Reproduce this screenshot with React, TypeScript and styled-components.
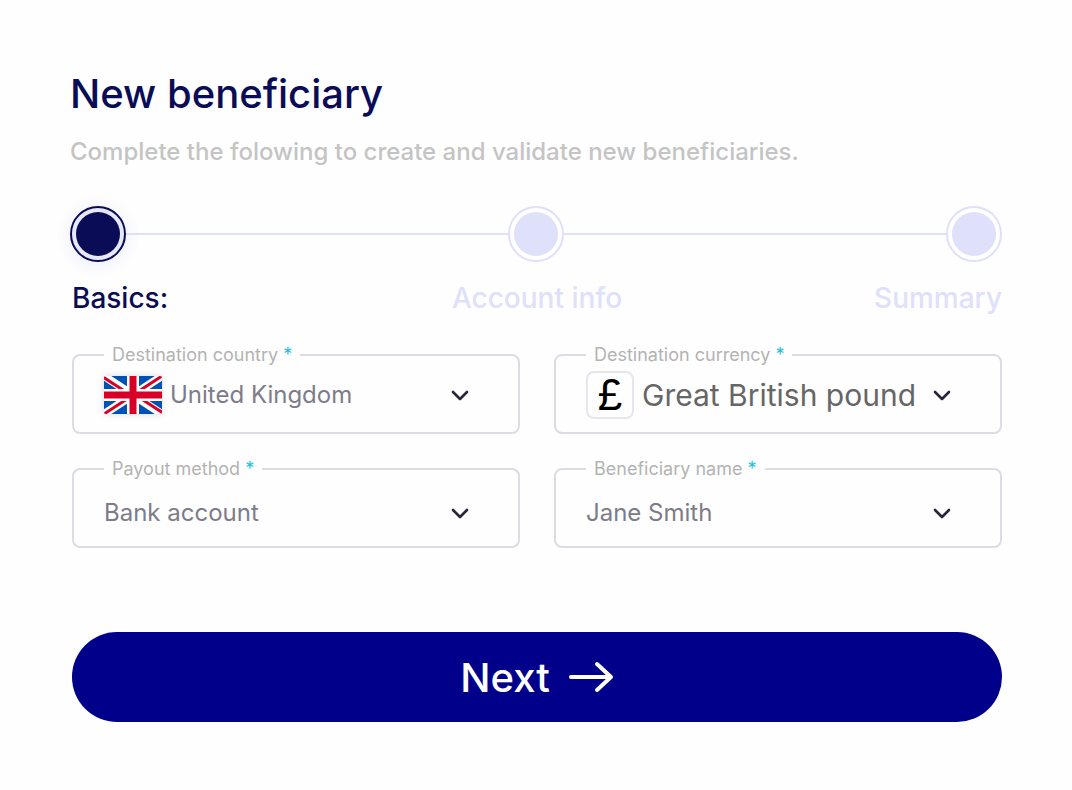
import React from "react";
import styled, { createGlobalStyle, css } from "styled-components";

const navy = "#0a0d56";
const lavender = "#dfe0fa";

const GlobalStyle = createGlobalStyle`
  *, *::before, *::after { box-sizing: border-box; }
  body {
    margin: 0;
    background: #fefefe;
    font-family: Inter, "Liberation Sans", sans-serif;
  }
`;

const Page = styled.main`
  padding: 70px 70px 68px;
`;

const Title = styled.h1`
  margin: 0;
  color: ${navy};
  font-size: 40px;
  line-height: 48px;
  font-weight: 500;
`;

const Subtitle = styled.p`
  margin: 18px 0 0;
  color: #c4c4c4;
  font-size: 24px;
  line-height: 32px;
  font-weight: 500;
`;

const Track = styled.div`
  display: flex;
  align-items: center;
  margin-top: 38px;
`;

const Line = styled.span`
  flex: 1;
  height: 2px;
  background: ${lavender};
`;

const Dot = styled.span<{ $active?: boolean }>`
  width: 56px;
  height: 56px;
  padding: 4px;
  border: 2px solid ${lavender};
  border-radius: 50%;
  background: #ffffff;

  &::before {
    content: "";
    display: block;
    height: 100%;
    border-radius: 50%;
    background: ${lavender};
  }

  ${({ $active }) =>
    $active &&
    css`
      border-color: ${navy};
      background: #e8e8fb;
      box-shadow: 0 2px 16px rgba(80, 80, 220, 0.12);

      &::before {
        background: ${navy};
      }
    `}
`;

const StepLabels = styled.ol`
  display: grid;
  grid-template-columns: repeat(3, 1fr);
  margin: 20px 0 0;
  padding: 0 0 0 2px;
  list-style: none;
`;

const StepLabel = styled.li<{ $align: "left" | "center" | "right"; $active?: boolean }>`
  color: ${({ $active }) => ($active ? navy : lavender)};
  text-align: ${({ $align }) => $align};
  font-size: 28px;
  line-height: 32px;
  font-weight: 500;
`;

const Form = styled.form`
  margin-top: 31px;
  padding-left: 2px;
`;

const Fields = styled.div`
  display: grid;
  grid-template-columns: repeat(2, minmax(0, 1fr));
  gap: 25px 34px;
`;

const FieldBox = styled.fieldset`
  min-width: 0;
  margin: 0;
  padding: 0 46px 0 30px;
  border: 2px solid #dcdce2;
  border-radius: 8px;
`;

const Legend = styled.legend`
  padding: 0 8px;
  color: #b3b3b3;
  font-size: 18px;
  line-height: 20px;
`;

const Required = styled.span`
  color: #26bfd9;
`;

const Control = styled.div<{ $raised: boolean }>`
  display: flex;
  align-items: center;
  gap: 8px;
  height: 67px;
  padding-bottom: ${({ $raised }) => ($raised ? 8 : 0)}px;
`;

const Select = styled.select<{ $large?: boolean }>`
  flex: 1;
  min-width: 0;
  height: 48px;
  margin: 0 -32px 0 0;
  padding: 0 24px 0 0;
  border: 0;
  appearance: none;
  background: transparent;
  color: ${({ $large }) => ($large ? "#666666" : "#7c7c8a")};
  font-family: inherit;
  font-size: ${({ $large }) => ($large ? 30 : 24)}px;
`;

const Chevron = styled.svg`
  flex: none;
  width: 24px;
  height: 24px;
  pointer-events: none;
`;

const Flag = styled.svg`
  flex: none;
  width: 58px;
  height: 38px;
  border-radius: 2px;
  filter: drop-shadow(0 0 3px rgba(0, 0, 0, 0.15));
`;

const Currency = styled.span`
  display: grid;
  place-items: center;
  flex: none;
  width: 48px;
  height: 48px;
  border: 2px solid #e6e6ec;
  border-radius: 8px;
  color: #000000;
  font-family: "Liberation Sans", sans-serif;
  font-size: 44px;
  line-height: 44px;
`;

const NextButton = styled.button`
  display: flex;
  align-items: center;
  justify-content: center;
  gap: 18px;
  width: 100%;
  height: 90px;
  margin-top: 84px;
  padding: 0;
  border: 0;
  border-radius: 45px;
  background: #00008b;
  color: #ffffff;
  font-family: inherit;
  font-size: 40px;
  font-weight: 500;
  cursor: pointer;
`;

const UnitedKingdomFlag = () => (
  <Flag viewBox="0 0 58 38" preserveAspectRatio="none" aria-hidden="true">
    <rect width="58" height="38" fill="#0052b4" />
    <path d="M0 0L58 38M58 0L0 38" stroke="#fff" strokeWidth="8" />
    <path d="M-1 1L22 16M59 37L36 22M58 0L35 15M0 38L23 23" stroke="#d80027" strokeWidth="3" />
    <path d="M29 0V38M0 19H58" stroke="#fff" strokeWidth="12" />
    <path d="M29 0V38M0 19H58" stroke="#d80027" strokeWidth="7" />
  </Flag>
);

interface FieldProps {
  id: string;
  label: string;
  value: string;
  icon?: React.ReactNode;
  large?: boolean;
}

const Field = ({ id, label, value, icon, large }: FieldProps) => (
  <FieldBox>
    <Legend>
      <label htmlFor={id}>
        {label} <Required>*</Required>
      </label>
    </Legend>
    <Control $raised={Boolean(icon)}>
      {icon}
      <Select id={id} $large={large} defaultValue={value} required>
        <option>{value}</option>
      </Select>
      <Chevron viewBox="0 0 24 24" fill="none" aria-hidden="true">
        <path
          d="M5 9l7 7 7-7"
          stroke="#28243c"
          strokeWidth="2.6"
          strokeLinecap="round"
          strokeLinejoin="round"
        />
      </Chevron>
    </Control>
  </FieldBox>
);

export default function App() {
  return (
    <>
      <GlobalStyle />
      <Page>
        <Title>New beneficiary</Title>
        <Subtitle>Complete the folowing to create and validate new beneficiaries.</Subtitle>
        <Track aria-hidden="true">
          <Dot $active />
          <Line />
          <Dot />
          <Line />
          <Dot />
        </Track>
        <StepLabels>
          <StepLabel $align="left" $active aria-current="step">
            Basics:
          </StepLabel>
          <StepLabel $align="center">Account info</StepLabel>
          <StepLabel $align="right">Summary</StepLabel>
        </StepLabels>
        <Form onSubmit={(event) => event.preventDefault()}>
          <Fields>
            <Field
              id="country"
              label="Destination country"
              value="United Kingdom"
              icon={<UnitedKingdomFlag />}
            />
            <Field
              id="currency"
              label="Destination currency"
              value="Great British pound"
              icon={<Currency aria-hidden="true">£</Currency>}
              large
            />
            <Field id="method" label="Payout method" value="Bank account" />
            <Field id="name" label="Beneficiary name" value="Jane Smith" />
          </Fields>
          <NextButton type="submit">
            Next
            <svg width="46" height="32" viewBox="0 0 46 32" fill="none" aria-hidden="true">
              <path
                d="M3 16H42M29 3L43 16L29 29"
                stroke="currentColor"
                strokeWidth="4"
                strokeLinecap="round"
                strokeLinejoin="round"
              />
            </svg>
          </NextButton>
        </Form>
      </Page>
    </>
  );
}
